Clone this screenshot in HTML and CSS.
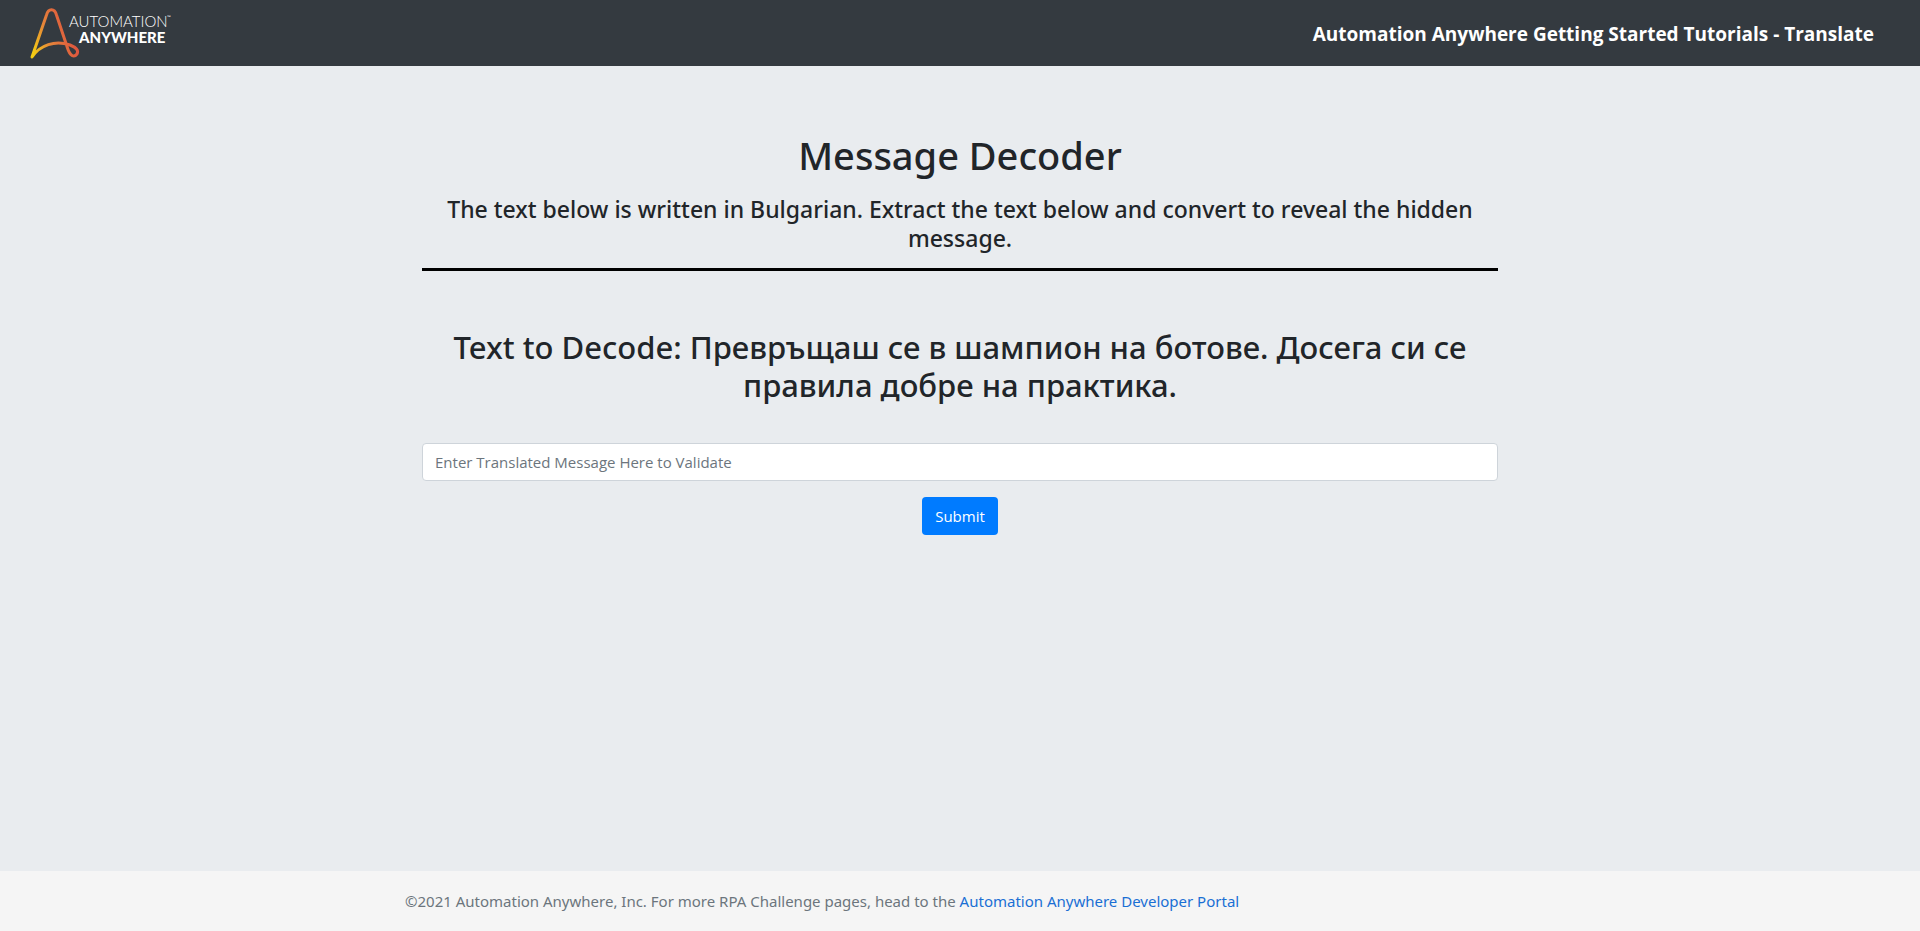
FILE: index.html
```html
<!DOCTYPE html>
<html lang="en">
<head>
<meta charset="utf-8">
<title>Message Decoder</title>
<link rel="stylesheet" href="styles.css">
</head>
<body>
<header class="navbar">
  <a class="brand" href="#" aria-label="Automation Anywhere">
    <svg class="brand-logo" viewBox="0 0 150 66" role="img" aria-label="Automation Anywhere">
      <defs>
        <linearGradient id="flame" gradientUnits="userSpaceOnUse" x1="2" y1="50" x2="48" y2="34">
          <stop offset="0" stop-color="#f4cc14"/>
          <stop offset="0.4" stop-color="#e5843a"/>
          <stop offset="1" stop-color="#dc4a40"/>
        </linearGradient>
      </defs>
      <path class="brand-mark" d="M2 57 L16.500 15 C18.500 8 24.500 8 26.500 15 L37.500 48 C40 56 44 58 47 54 C49 50 46 47.500 40 45 C25 40 10 45 2 57 Z"/>
      <text class="brand-light" x="39" y="27">AUTOMATION</text>
      <text class="brand-tm" x="137" y="19">™</text>
      <text class="brand-bold" x="49" y="43">ANYWHERE</text>
    </svg>
  </a>
  <span class="navbar-title">Automation Anywhere Getting Started Tutorials - Translate</span>
</header>
<main class="content">
  <h1 class="title">Message Decoder</h1>
  <p class="lead">The text below is written in Bulgarian. Extract the text below and convert to reveal the hidden message.</p>
  <hr class="divider">
  <h2 class="message">Text to Decode: <span lang="bg">Превръщаш се в шампион на ботове. Досега си се правила добре на практика.</span></h2>
  <form class="form">
    <input class="field" type="text" aria-label="Translated message" placeholder="Enter Translated Message Here to Validate">
    <button class="submit" type="button">Submit</button>
  </form>
</main>
<footer class="footer">
  <p class="footer-text">©2021 Automation Anywhere, Inc. For more RPA Challenge pages, head to the <a class="footer-link" href="#">Automation Anywhere Developer Portal</a></p>
</footer>
</body>
</html>
```

FILE: styles.css
```css
*, *::before, *::after { box-sizing: border-box; }

body {
  margin: 0;
  min-height: 100vh;
  display: flex;
  flex-direction: column;
  background: #e9ecef;
  color: #212529;
  font-family: "Open Sans", "Noto Sans", sans-serif;
  font-size: 15px;
  line-height: 24px;
}

.navbar {
  display: flex;
  align-items: center;
  justify-content: space-between;
  padding: 0 46px 0 30px;
  background: #343a40;
}

.brand, .brand-logo { display: block; }
.brand-logo { width: 150px; height: 66px; }
.brand-mark { fill: none; stroke: url(#flame); stroke-width: 3; stroke-linejoin: round; }
.brand-light, .brand-bold, .brand-tm { fill: #fff; font-family: Lato, sans-serif; }
.brand-light { font-size: 15px; font-weight: 300; }
.brand-bold { font-size: 15px; font-weight: 900; }
.brand-tm { font-size: 5px; }

.navbar-title { padding-top: 2px; color: #fff; font-size: 19px; font-weight: 700; }

.content {
  width: 100%;
  max-width: 1140px;
  margin: 0 auto;
  padding: 65px 32px;
  flex: 1;
  text-align: center;
}

.title, .lead, .message {
  font-family: "Noto Sans", "Open Sans", sans-serif;
  font-weight: 500;
}
.title { margin: 0 0 16px; font-size: 38px; line-height: 48px; }
.lead { margin: 0 0 15px; font-size: 23px; line-height: 29px; }
.divider { margin: 0 0 57px; border: 0; border-top: 3px solid #000; }
.message { margin: 0 0 39px; font-size: 31px; line-height: 38px; }

.form { display: flex; flex-direction: column; align-items: center; gap: 16px; }
.field {
  width: 100%;
  height: 38px;
  padding: 6px 12px;
  border: 1px solid #ced4da;
  border-radius: 4px;
  background: #fff;
  color: #495057;
  font: inherit;
}
.field::placeholder { color: #6c757d; opacity: 1; }
.submit {
  height: 38px;
  padding: 0 13px;
  border: 0;
  border-radius: 4px;
  background: #007bff;
  color: #fff;
  font: inherit;
}

.footer { background: #f5f5f5; }
.footer-text {
  max-width: 1140px;
  margin: 0 auto;
  padding: 0 15px;
  font-family: "Noto Sans", "Open Sans", sans-serif;
  line-height: 60px;
  color: #6c757d;
}
.footer-link { color: #1a6fd4; text-decoration: none; }
```
